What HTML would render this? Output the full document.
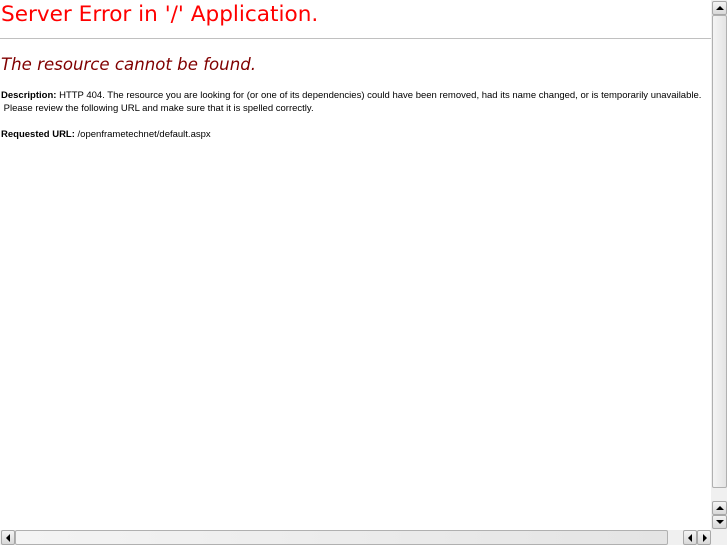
<!DOCTYPE html>
<html><head><meta charset="utf-8"><style>
html,body{margin:0;padding:0;width:727px;height:545px;overflow:hidden;background:#fff;font-family:"DejaVu Sans","Liberation Sans",sans-serif;}
.t{position:absolute;white-space:nowrap;}
h1{position:absolute;left:1px;top:2px;margin:0;font-weight:normal;font-size:21.6px;color:#f00;}
hr{position:absolute;left:0;top:38px;width:711px;margin:0;border:0;border-top:1px solid #c0c0c0;}
h2{position:absolute;left:1px;top:55px;margin:0;font-weight:normal;font-style:italic;font-size:16.6px;color:#800000;}
.s{font-size:9.5px;color:#000;font-family:"Liberation Sans",sans-serif;}
.btn{position:absolute;background:linear-gradient(#f4f4f4,#d8d8d8);border:1px solid #a8a8a8;border-radius:2px;box-sizing:border-box;}
.tr{position:absolute;background:#f0f0f0;}
.th{position:absolute;background:linear-gradient(90deg,#f4f4f4,#e4e4e4);border:1px solid #b0b0b0;border-radius:2px;box-sizing:border-box;}
.ar{position:absolute;width:0;height:0;}
</style></head><body>
<h1>Server Error in '/' Application.</h1>
<hr>
<h2>The resource cannot be found.</h2>
<div class="t s" style="left:1px;top:90px;"><b>Description:</b> HTTP 404. The resource you are looking for (or one of its dependencies) could have been removed, had its name changed, or is temporarily unavailable.</div>
<div class="t s" style="left:1px;top:103px;">&nbsp;Please review the following URL and make sure that it is spelled correctly.</div>
<div class="t s" style="left:1px;top:129px;"><b>Requested URL:</b> /openframetechnet/default.aspx</div>

<div class="tr" style="left:711px;top:0;width:16px;height:530px;"></div>
<div class="btn" style="left:712px;top:1px;width:15px;height:14px;"><div class="ar" style="left:3px;top:4px;border-left:4px solid transparent;border-right:4px solid transparent;border-bottom:4px solid #000;"></div></div>
<div class="th" style="left:712px;top:15px;width:15px;height:473px;"></div>
<div class="btn" style="left:712px;top:501px;width:15px;height:14px;"><div class="ar" style="left:3px;top:4px;border-left:4px solid transparent;border-right:4px solid transparent;border-bottom:4px solid #000;"></div></div>
<div class="btn" style="left:712px;top:515px;width:15px;height:14px;"><div class="ar" style="left:3px;top:4px;border-left:4px solid transparent;border-right:4px solid transparent;border-top:4px solid #000;"></div></div>

<div class="tr" style="left:0;top:530px;width:727px;height:15px;"></div>
<div class="btn" style="left:1px;top:530px;width:14px;height:15px;"><div class="ar" style="left:4px;top:3px;border-top:4px solid transparent;border-bottom:4px solid transparent;border-right:4px solid #000;"></div></div>
<div class="th" style="left:15px;top:530px;width:653px;height:15px;"></div>
<div class="btn" style="left:683px;top:530px;width:14px;height:15px;"><div class="ar" style="left:4px;top:3px;border-top:4px solid transparent;border-bottom:4px solid transparent;border-right:4px solid #000;"></div></div>
<div class="btn" style="left:697px;top:530px;width:14px;height:15px;"><div class="ar" style="left:5px;top:3px;border-top:4px solid transparent;border-bottom:4px solid transparent;border-left:4px solid #000;"></div></div>
</body></html>
